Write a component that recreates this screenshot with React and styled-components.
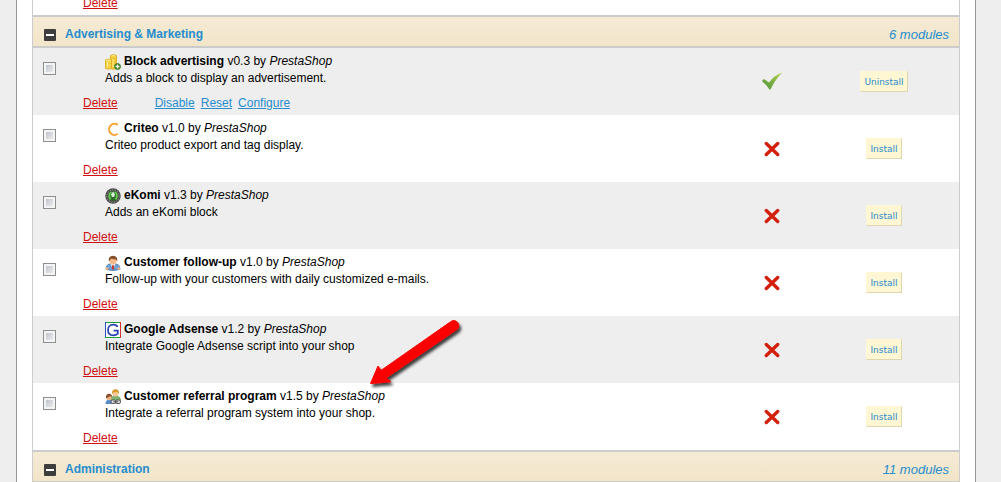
import React from 'react'
import styled, { createGlobalStyle } from 'styled-components'

const GlobalStyle = createGlobalStyle`
    body {
        margin: 0;
        background: #eee;
        font-family: "Liberation Sans", Arial, sans-serif;
        font-size: 12px;
        line-height: 17px;
        color: #000;
    }
`
const Page = styled.div`
    position: relative;
    margin: 0 25px 0 16px;
    padding: 0 15px;
    background: #fff;
    border: solid #999;
    border-width: 0 1px;
`
const Panel = styled.main`
    border: solid #ccc;
    border-width: 0 1px;
`
const PreviousRow = styled.div`
    display: flex;
    align-items: flex-end;
    height: 12px;
    padding: 0 0 3px 50px;
    overflow: hidden;
`
const CategoryBar = styled.header`
    display: flex;
    align-items: center;
    gap: 9px;
    height: 24px;
    padding: 5px 10px 0 11px;
    background: linear-gradient(#f5ead5, #f2e5c9);
    border: solid #ccc;
    border-width: 2px 0;
`
const ToggleButton = styled.button`
    display: flex;
    width: 12px;
    height: 12px;
    margin-top: 2px;
    padding: 0;
    border: none;
    background: transparent;
    cursor: pointer;
`
const CategoryTitle = styled.h2`
    flex: 1;
    margin: 0;
    font-size: 12px;
    color: #268ccd;
`
const ModuleCount = styled.em`
    font-size: 13px;
    color: #268ccd;
`
const ModuleTable = styled.table`
    width: 100%;
    table-layout: fixed;
    border-collapse: collapse;
`
const ModuleRow = styled.tr`
    height: 67px;
    background: #fff;
    &:nth-child(odd) {
        background: #eee;
    }
`
const Cell = styled.td`
    width: ${props => props.$width || 'auto'};
    padding: 0;
    vertical-align: ${props => props.$top ? 'top' : 'middle'};
    text-align: ${props => props.$center ? 'center' : 'left'};
    svg {
        display: inline-block;
        vertical-align: middle;
    }
`
const Checkbox = styled.input`
    appearance: none;
    display: block;
    width: 13px;
    height: 13px;
    margin: 14px 0 0 10px;
    border: 1px solid #8e8f8f;
    background: linear-gradient(135deg, #b4bac4, #f6f6f6);
    background-clip: padding-box;
    box-shadow: inset 0 0 0 2px #f4f4f4;
`
const Details = styled.div`
    padding: 5px 0 0 22px;
`
const Title = styled.div`
    display: flex;
    gap: 3px;
    height: 17px;
    svg {
        margin-top: 1px;
    }
`
const Description = styled.div`
    height: 17px;
`
const Actions = styled.div`
    display: flex;
    gap: 6px;
    padding-top: 8px;
`
const ActionLink = styled.a`
    color: #268ccd;
`
const DeleteLink = styled.a`
    margin-right: 31px;
    color: #d01010;
`
const InstallButton = styled.button`
    height: 21px;
    padding: 0 3px;
    border: 1px solid;
    border-color: #fff6d3 #dfd5af #dfd5af #fff6d3;
    background: #fff6d3;
    font-family: "DejaVu Sans", Verdana, sans-serif;
    font-size: 9px;
    color: #268ccd;
    cursor: pointer;
`
const Arrow = styled.svg`
    position: absolute;
    left: 347px;
    top: 314px;
    pointer-events: none;
`

const MinusIcon = () => (
    <svg width="12" height="12" viewBox="0 0 12 12">
        <rect width="12" height="12" rx="1" fill="#3d3d3d" />
        <rect x="2" y="5" width="8" height="2" fill="#fff" />
    </svg>
)

const CoinsIcon = () => (
    <svg width="16" height="16" viewBox="0 0 16 16">
        <path d="M5.500 1.500q3-2 6 0v13q-3 1.500-6 0z" fill="#f6cf35" stroke="#d9a520" strokeWidth=".8" />
        <path d="M.5 6q3-2 6 0v8.500q-3 1.500-6 0z" fill="#f9d849" stroke="#d9a520" strokeWidth=".8" />
        <path d="M6.500 4.500q2.500 1 5 0m-5 3q2.500 1 5 0m-5 3q2.500 1 5 0M1 9.500q2.500 1 5 0m-5 3q2.500 1 5 0" fill="none" stroke="#e3b32f" strokeWidth=".6" />
        <path d="M6.500 2q2-1 4 0M1.500 6.500q2-1 4 0M8 5v8M2.500 8v5" fill="none" stroke="#fff0a0" />
        <circle cx="12.500" cy="12.500" r="3" fill="#5a9a3c" stroke="#33702c" strokeWidth=".8" />
        <path d="M12.500 10.700v3.600m-1.800-1.800h3.600" stroke="#fff" strokeWidth="1.200" />
    </svg>
)

const CriteoIcon = () => (
    <svg width="16" height="16" viewBox="0 0 16 16">
        <path d="M12.700 4A5.300 5.600 0 1 0 12.700 12.800" fill="none" stroke="#f9a12c" strokeWidth="2" />
    </svg>
)

const EkomiIcon = () => (
    <svg width="16" height="16" viewBox="0 0 16 16">
        <circle cx="8" cy="8" r="7.700" fill="#454545" />
        <circle cx="8" cy="8" r="6.200" fill="none" stroke="#858585" strokeWidth="1.200" strokeDasharray="1.500 1" />
        <circle cx="8" cy="8" r="4.800" fill="#2f6a2b" />
        <path d="M6.500 4C4 5 3.500 9 5.500 11.500M9.500 4c3 1 3 5 1 7.500" fill="none" stroke="#65cf51" strokeWidth="1.800" />
        <path d="M8 3.500l2 3-1 2.500H7L6 6.500z" fill="#d8efd4" />
    </svg>
)

const CustomerIcon = () => (
    <svg width="16" height="16" viewBox="0 0 16 16">
        <path d="M1 14.500Q1 9 5.500 9h5Q15 9 15 14.500q-7 2-14 0z" fill="#6da2d6" stroke="#3868a0" strokeWidth=".7" />
        <path d="M5.500 9L8 14l2.500-5z" fill="#e8f2fb" />
        <path d="M7.400 10h1.300l.6 3.500L8 15l-1.300-1.500z" fill="#c63a2c" />
        <circle cx="8" cy="5.800" r="3.600" fill="#f2bb88" />
        <path d="M3.800 6.500Q3 1 8 .8q5 .2 4.200 5.700L11 4.500Q8 4.500 6.500 3.500L5 5z" fill="#84502a" />
        <circle cx="2.200" cy="13.700" r="1.400" fill="#efb481" />
        <circle cx="13.800" cy="13.700" r="1.400" fill="#efb481" />
    </svg>
)

const GoogleIcon = () => (
    <svg width="16" height="16" viewBox="0 0 16 16">
        <path d="M0 0h16v16H0z" fill="#fff" />
        <path d="M0 .5h15" stroke="#1a9c3c" />
        <path d="M.5 0v15" stroke="#2a50c8" />
        <path d="M15.500 0v16" stroke="#d83030" />
        <path d="M0 15.500h15" stroke="#22a040" />
        <path d="M12.500 5Q11.500 2.700 8.500 2.700 3 2.700 3 8t5.300 5.300q2.700 0 4.500-1.700V8.700H8.700" fill="none" stroke="#2543b0" strokeWidth="1.700" />
    </svg>
)

const ReferralIcon = () => (
    <svg width="16" height="16" viewBox="0 0 16 16">
        <path d="M5 13Q5 7 10.500 7T16 13z" fill="#7db36d" stroke="#477e3c" strokeWidth=".6" />
        <circle cx="10.500" cy="4.500" r="3" fill="#f5c895" />
        <path d="M7 5Q6.500.5 10.500.3 14.500.5 14 5l-1.500-2Q10 3.500 9 3z" fill="#d99a2b" />
        <path d="M.5 15Q.5 10.500 4.500 10.500T8.500 15z" fill="#558bc6" />
        <circle cx="4" cy="8.500" r="2.700" fill="#efb683" />
        <path d="M1 9.500Q.5 5 4 4.800 7.500 5 7 8.500L5.500 7z" fill="#875231" />
        <rect x="6" y="11" width="5" height="3.500" rx="1.500" fill="#ddd" stroke="#555" />
        <rect x="10.500" y="11" width="5" height="3.500" rx="1.500" fill="#ddd" stroke="#555" />
        <path d="M8.500 12.800h4.500" stroke="#444" />
    </svg>
)

const CheckIcon = () => (
    <svg width="22" height="20" viewBox="0 0 22 20">
        <defs>
            <linearGradient id="tick" x1="0" y1="1" x2="1" y2="0">
                <stop offset=".2" stopColor="#5f9e3f" />
                <stop offset="1" stopColor="#b8d050" />
            </linearGradient>
        </defs>
        <path d="M.8 9L3 7l5 3.500Q13 3.500 21.300.5 14.500 7 9.500 17.500H8.500Q5 12 .8 9z" fill="url(#tick)" />
    </svg>
)

const CrossIcon = () => (
    <svg width="16" height="16" viewBox="0 0 16 16">
        <path d="M2.300 2.500l11.400 11M13.700 2.500L2.300 13.500" stroke="#d3200c" strokeWidth="3.400" strokeLinecap="round" />
    </svg>
)

const modules = [
    { name: 'Block advertising', version: 'v0.3', text: 'Adds a block to display an advertisement.', icon: CoinsIcon, installed: true },
    { name: 'Criteo', version: 'v1.0', text: 'Criteo product export and tag display.', icon: CriteoIcon },
    { name: 'eKomi', version: 'v1.3', text: 'Adds an eKomi block', icon: EkomiIcon },
    { name: 'Customer follow-up', version: 'v1.0', text: 'Follow-up with your customers with daily customized e-mails.', icon: CustomerIcon },
    { name: 'Google Adsense', version: 'v1.2', text: 'Integrate Google Adsense script into your shop', icon: GoogleIcon },
    { name: 'Customer referral program', version: 'v1.5', text: 'Integrate a referral program system into your shop.', icon: ReferralIcon },
]

const Category = ({ title, count }) => (
    <CategoryBar>
        <ToggleButton aria-label={`Collapse ${title}`}><MinusIcon /></ToggleButton>
        <CategoryTitle>{title}</CategoryTitle>
        <ModuleCount>{count} modules</ModuleCount>
    </CategoryBar>
)

const Module = ({ name, version, text, icon: Icon, installed }) => (
    <ModuleRow>
        <Cell $width="50px" $top>
            <Checkbox type="checkbox" aria-label={name} />
        </Cell>
        <Cell $top>
            <Details>
                <Title>
                    <Icon />
                    <span><b>{name}</b> {version} by <i>PrestaShop</i></span>
                </Title>
                <Description>{text}</Description>
            </Details>
            <Actions>
                <DeleteLink href="#">Delete</DeleteLink>
                {installed && (
                    <>
                        <ActionLink href="#">Disable</ActionLink>
                        <ActionLink href="#">Reset</ActionLink>
                        <ActionLink href="#">Configure</ActionLink>
                    </>
                )}
            </Actions>
        </Cell>
        <Cell $width="74px" $center>{installed ? <CheckIcon /> : <CrossIcon />}</Cell>
        <Cell $width="150px" $center>
            <InstallButton>{installed ? 'Uninstall' : 'Install'}</InstallButton>
        </Cell>
    </ModuleRow>
)

const App = () => {
    return (
        <>
            <GlobalStyle />
            <Page>
                <Panel>
                    <PreviousRow><DeleteLink href="#">Delete</DeleteLink></PreviousRow>
                    <Category title="Advertising & Marketing" count={6} />
                    <ModuleTable>
                        <tbody>
                            {modules.map(module => <Module key={module.name} {...module} />)}
                        </tbody>
                    </ModuleTable>
                    <Category title="Administration" count={11} />
                </Panel>
                <Arrow width="104" height="80" viewBox="0 0 104 80">
                    <defs>
                        <filter id="shade" x="-20%" y="-20%" width="140%" height="150%">
                            <feDropShadow dx="2" dy="3" stdDeviation="1.500" floodColor="#000" floodOpacity=".75" />
                        </filter>
                    </defs>
                    <path d="M6.500 69.500L14 52l3.200 4.300L86.500 7.800a5 5 0 0 1 6.500 7.600L22 64l5 3.700z" fill="#fa0000" stroke="#fa0000" strokeLinejoin="round" filter="url(#shade)" />
                </Arrow>
            </Page>
        </>
    )
}

export default App
